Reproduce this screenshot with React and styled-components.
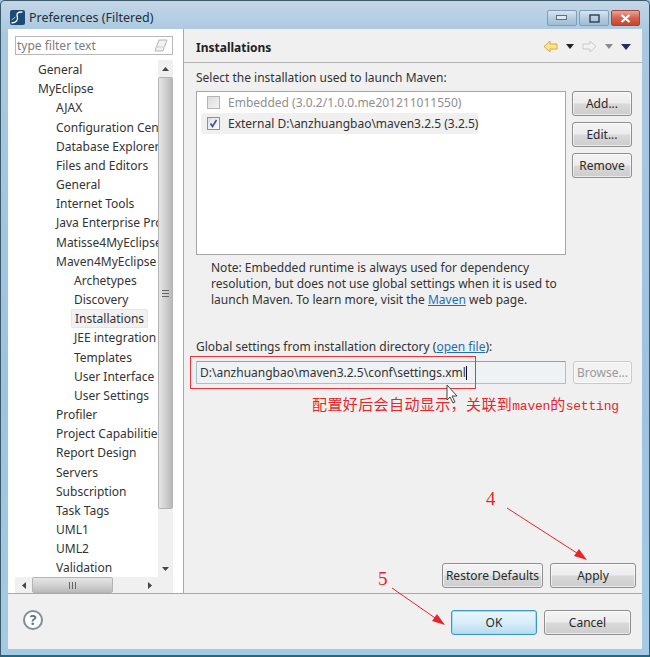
import React from 'react'
import styled, { createGlobalStyle } from 'styled-components'

const UI_FONT = '"Noto Sans", "Open Sans", sans-serif'

const GlobalStyle = createGlobalStyle`
  html, body { margin: 0; padding: 0; background: #9fc3dd; }
  * { box-sizing: border-box; }
`

const Window = styled.div`
  position: relative;
  width: 650px;
  height: 657px;
  overflow: hidden;
  display: flex;
  flex-direction: column;
  padding: 0 7px 6px;
  font-family: ${UI_FONT};
  font-size: 12px;
  color: #333;
  background: linear-gradient(180deg, #c3d6e6 0%, #a9c8e0 5%, #9dc3df 60%, #a4cbe3 100%);
  border: 1px solid #3d5a6d;
  border-bottom: 2px solid #1b6c80;
  border-radius: 5px 5px 0 0;
`

const TitleBar = styled.div`
  flex: none;
  height: 28px;
  display: flex;
  align-items: center;
  gap: 4px;
  padding: 4px 0 0 2px;
  margin-right: 2px;
`

const TitleText = styled.div`
  flex: 1;
  font-size: 12.5px;
  color: #20303c;
`

const WinButtons = styled.div`
  display: flex;
  gap: 2px;
  align-self: flex-start;
  margin-top: 5px;
`

const WinButton = styled.div`
  width: ${(p) => (p.$close ? '29px' : '30px')};
  height: 16px;
  display: flex;
  align-items: center;
  justify-content: center;
  border: 1px solid ${(p) => (p.$close ? '#9c4b3e' : '#7f9db5')};
  border-radius: 2px;
  background: ${(p) =>
    p.$close
      ? 'linear-gradient(180deg, #e8a598 0%, #d9604c 50%, #c6452f 100%)'
      : 'linear-gradient(180deg, #d7e5f0 0%, #b5cde0 50%, #9fbcd3 100%)'};
`

const Client = styled.div`
  flex: 1;
  min-height: 0;
  display: flex;
  flex-direction: column;
  background: #f0f0f0;
`

const Main = styled.div`
  flex: 1;
  min-height: 0;
  display: flex;
  border-bottom: 1px solid #a9a9a9;
`

const Sidebar = styled.div`
  flex: none;
  width: 176px;
  display: flex;
  flex-direction: column;
  padding: 7px 10px 0 7px;
  background: #fff;
  border-right: 1px solid #a9a9a9;
`

const FilterBox = styled.div`
  flex: none;
  height: 19px;
  display: flex;
  align-items: center;
  justify-content: space-between;
  padding: 0 4px 0 1px;
  border: 1px solid #b8b8b8;
  color: #7c7c7c;
  font-size: 12px;
`

const TreeArea = styled.div`
  flex: 1;
  min-height: 0;
  margin-top: 5px;
  display: grid;
  grid-template-columns: 143px 15px;
  grid-template-rows: 1fr 16px;
`

const Tree = styled.div`
  overflow: hidden;
`

const TreeRow = styled.div`
  height: 19.18px;
  line-height: 19px;
  padding-left: ${(p) => 23 + p.$level * 18}px;
  white-space: nowrap;
`

const SelectedLabel = styled.span`
  display: inline-block;
  height: 19px;
  margin-left: -3px;
  padding: 0 3px;
  background: #f1f1f1;
  border: 1px solid #e6e6e6;
  border-radius: 2px;
  line-height: 17px;
`

const VScroll = styled.div`
  display: flex;
  flex-direction: column;
  background: #f0f0f0;
`

const ScrollArrow = styled.div`
  flex: none;
  width: ${(p) => (p.$wide ? '17px' : 'auto')};
  height: ${(p) => (p.$wide ? 'auto' : '17px')};
  margin-top: ${(p) => (p.$end ? 'auto' : '0')};
  display: flex;
  align-items: center;
  justify-content: center;
`

const VThumb = styled.div`
  flex: none;
  height: 432px;
  display: flex;
  align-items: center;
  justify-content: center;
  background: linear-gradient(90deg, #e6e6e6 0%, #d0d0d0 50%, #b8b8b8 100%);
  border: 1px solid #b4b4b4;
  border-radius: 2px;
  color: #555;
`

const HScroll = styled.div`
  display: flex;
  justify-content: space-between;
  background: #f0f0f0;
`

const HThumb = styled.div`
  width: 81px;
  display: flex;
  align-items: center;
  justify-content: center;
  margin-right: auto;
  background: linear-gradient(180deg, #e6e6e6 0%, #d2d2d2 50%, #bababa 100%);
  border: 1px solid #b4b4b4;
  border-radius: 2px;
`

const ScrollCorner = styled.div`
  background: #f0f0f0;
`

const Content = styled.div`
  flex: 1;
  min-width: 0;
  display: flex;
  flex-direction: column;
`

const ContentHeader = styled.div`
  flex: none;
  height: 34px;
  display: flex;
  align-items: center;
  justify-content: space-between;
  padding: 2px 11px 0 12px;
  border-bottom: 1px solid #b4b4b4;
`

const HeaderTitle = styled.div`
  font-weight: 700;
  font-size: 12px;
  padding-top: 2px;
  color: #222;
`

const NavIcons = styled.div`
  display: flex;
  align-items: center;
  gap: 8px;
`

const ContentBody = styled.div`
  flex: 1;
  min-height: 0;
  display: flex;
  flex-direction: column;
  padding: 7px 10px 5px 12px;
`

const Label = styled.div`
  height: 16px;
  line-height: 16px;
  white-space: nowrap;
`

const InstallRow = styled.div`
  display: flex;
  gap: 6px;
  margin-top: 5px;
`

const ListBox = styled.div`
  width: 370px;
  height: 164px;
  padding: 0 1px;
  background: #fff;
  border: 1px solid #a6a6a6;
`

const ListRow = styled.div`
  height: 21px;
  display: flex;
  align-items: center;
  gap: 8px;
  width: ${(p) => (p.$selected ? '277px' : 'auto')};
  margin-left: ${(p) => (p.$selected ? '3px' : '0')};
  padding-left: ${(p) => (p.$selected ? '6px' : '9px')};
  color: ${(p) => (p.$muted ? '#8e8e8e' : '#333')};
  background: ${(p) => (p.$selected ? '#f0f0f0' : 'transparent')};
  border-radius: 2px;
  white-space: nowrap;
`

const CheckBox = styled.div`
  flex: none;
  width: 13px;
  height: 13px;
  display: flex;
  align-items: center;
  justify-content: center;
  border: 1px solid ${(p) => (p.$muted ? '#b5b5b5' : '#8f8f9c')};
  background: ${(p) => (p.$muted ? 'linear-gradient(135deg, #dcdcdc, #f4f4f4)' : 'linear-gradient(135deg, #dcdce4, #fff)')};
`

const ButtonColumn = styled.div`
  display: flex;
  flex-direction: column;
  gap: 6px;
`

const Button = styled.div`
  flex: none;
  width: ${(p) => p.$w}px;
  height: ${(p) => p.$h || 25}px;
  display: flex;
  align-items: center;
  justify-content: center;
  white-space: nowrap;
  font-size: 12px;
  color: ${(p) => (p.$disabled ? '#9a9a9a' : '#2a2a2a')};
  border: 1px solid ${(p) => (p.$primary ? '#3c9ac4' : p.$disabled ? '#c9c9c9' : '#8f8f8f')};
  border-radius: 3px;
  background: ${(p) =>
    p.$primary
      ? 'linear-gradient(180deg, #eaf6fc 0%, #d8eefa 50%, #b4dcf0 100%)'
      : p.$disabled
        ? '#f2f2f2'
        : 'linear-gradient(180deg, #f4f4f4 0%, #ececec 48%, #d9d9d9 52%, #cdcdcd 100%)'};
  box-shadow: ${(p) => (p.$primary ? 'inset 0 0 0 1px #9fdcf3' : 'inset 0 0 0 1px rgba(255,255,255,.6)')};
`

const Note = styled.div`
  margin: 5px 0 0 15px;
  width: 352px;
  line-height: 16px;
`

const LinkText = styled.span`
  color: #1a6fb8;
  text-decoration: underline;
`

const GlobalLabel = styled(Label)`
  margin-top: 31px;
`

const PathRow = styled.div`
  display: flex;
  gap: 7px;
  margin-top: 6px;
`

const PathInput = styled.div`
  width: 370px;
  height: 23px;
  display: flex;
  align-items: center;
  padding-left: 3px;
  background: #eef2f5;
  border: 1px solid #a7c0d4;
  border-top-color: #7da7c8;
  border-radius: 1px;
  white-space: nowrap;
`

const Caret = styled.span`
  display: inline-block;
  width: 1px;
  height: 14px;
  background: #111;
`

const BottomRow = styled.div`
  margin-top: auto;
  margin-right: -4px;
  display: flex;
  justify-content: flex-end;
  gap: 7px;
`

const Footer = styled.div`
  flex: none;
  height: 55px;
  display: flex;
  align-items: flex-start;
  gap: 7px;
  padding: 16px 11px 0 15px;
`

const HelpIcon = styled.div`
  width: 20px;
  height: 20px;
  margin-right: auto;
  display: flex;
  align-items: center;
  justify-content: center;
  border: 2px solid #7d8ea3;
  border-radius: 50%;
  background: #fff;
  color: #60738c;
  font-size: 14px;
  font-weight: 700;
  line-height: 1;
`

const RedBox = styled.div`
  position: absolute;
  left: 189px;
  top: 355px;
  width: 286px;
  height: 33px;
  border: 1px solid #e8343a;
`

const RedNote = styled.div`
  position: absolute;
  left: 311px;
  top: 393px;
  font-family: "Liberation Mono", "Noto Sans CJK SC", monospace;
  font-size: 13px;
  letter-spacing: -0.2px;
  line-height: 20px;
  color: #e5262c;
  white-space: nowrap;
`

const Cjk = styled.span`
  font-family: "Noto Sans CJK SC", sans-serif;
  font-size: 15px;
  letter-spacing: 0.4px;
`

const StepNumber = styled.div`
  position: absolute;
  left: ${(p) => p.$x}px;
  top: ${(p) => p.$y}px;
  font-family: "Liberation Serif", serif;
  font-size: 19px;
  line-height: 20px;
  color: #e5262c;
`

const Overlay = styled.svg`
  position: absolute;
  left: -1px;
  top: -1px;
  pointer-events: none;
`

const treeItems = [
  ['General', 0], ['MyEclipse', 0], ['AJAX', 1], ['Configuration Center', 1], ['Database Explorer', 1],
  ['Files and Editors', 1], ['General', 1], ['Internet Tools', 1], ['Java Enterprise Project', 1],
  ['Matisse4MyEclipse', 1], ['Maven4MyEclipse', 1], ['Archetypes', 2], ['Discovery', 2],
  ['Installations', 2, true], ['JEE integration', 2], ['Templates', 2], ['User Interface', 2],
  ['User Settings', 2], ['Profiler', 1], ['Project Capabilities', 1], ['Report Design', 1], ['Servers', 1],
  ['Subscription', 1], ['Task Tags', 1], ['UML1', 1], ['UML2', 1], ['Validation', 1],
]

const Triangle = ({ dir = 'down', color = '#222', w = 9, h = 5 }) => {
  const points = {
    down: `0,0 ${w},0 ${w / 2},${h}`,
    up: `0,${h} ${w},${h} ${w / 2},0`,
    left: `${w},0 ${w},${h} 0,${h / 2}`,
    right: `0,0 0,${h} ${w},${h / 2}`,
  }
  return (
    <svg width={w} height={h}>
      <polygon points={points[dir]} fill={color} />
    </svg>
  )
}

const NavArrow = ({ flip, fill, stroke }) => (
  <svg width="15" height="13" viewBox="0 0 15 13" style={flip ? { transform: 'scaleX(-1)' } : undefined}>
    <path d="M1 6.5 L7 1 V4 H14 V9 H7 V12 Z" fill={fill} stroke={stroke} strokeWidth="1" strokeLinejoin="round" />
  </svg>
)

const AppLogo = () => (
  <svg width="15" height="15" viewBox="0 0 15 15">
    <rect width="15" height="15" rx="2" fill="#1d4a75" />
    <path d="M12.5 2.2 C9 1.5 6.5 3 7 5.5 C7.4 7.7 8.6 9 6.5 11 C5 12.4 3 13 1.5 12.6" fill="none" stroke="#fff" strokeWidth="1.3" />
    <path d="M1.5 10 L5.5 7" stroke="#9cc0dc" strokeWidth="1" />
  </svg>
)

const App = () => {
  return (
    <Window>
      <GlobalStyle />
      <TitleBar>
        <AppLogo />
        <TitleText>Preferences (Filtered)</TitleText>
        <WinButtons>
          <WinButton>
            <svg width="12" height="6"><rect x="0.5" y="0.5" width="10" height="4" fill="#dfe8f0" stroke="#5a6f82" /></svg>
          </WinButton>
          <WinButton>
            <svg width="11" height="9"><rect x="1" y="1" width="9" height="7" fill="none" stroke="#33475a" strokeWidth="1.5" /></svg>
          </WinButton>
          <WinButton $close>
            <svg width="11" height="9"><path d="M1.5 1 L9.5 8 M9.5 1 L1.5 8" stroke="#fff" strokeWidth="2.2" /></svg>
          </WinButton>
        </WinButtons>
      </TitleBar>
      <Client>
        <Main>
          <Sidebar>
            <FilterBox>
              type filter text
              <svg width="14" height="13" viewBox="0 0 14 13">
                <path d="M5 1 H13 L9 12 H1 Z" fill="#f2f2f2" stroke="#b5b5b5" />
                <path d="M3 8 L11 8" stroke="#cfcfcf" />
              </svg>
            </FilterBox>
            <TreeArea>
              <Tree>
                {treeItems.map(([name, level, selected], i) => (
                  <TreeRow key={i} $level={level}>
                    {selected ? <SelectedLabel>{name}</SelectedLabel> : name}
                  </TreeRow>
                ))}
              </Tree>
              <VScroll>
                <ScrollArrow><Triangle dir="up" color="#444" w={7} h={4} /></ScrollArrow>
                <VThumb>
                  <svg width="7" height="7"><path d="M0 .5H7M0 3.5H7M0 6.5H7" stroke="#666" /></svg>
                </VThumb>
                <ScrollArrow $end><Triangle color="#444" w={7} h={4} /></ScrollArrow>
              </VScroll>
              <HScroll>
                <ScrollArrow $wide><Triangle dir="left" color="#444" w={4} h={7} /></ScrollArrow>
                <HThumb>
                  <svg width="7" height="7"><path d="M.5 0V7M3.5 0V7M6.5 0V7" stroke="#666" /></svg>
                </HThumb>
                <ScrollArrow $wide><Triangle dir="right" color="#444" w={4} h={7} /></ScrollArrow>
              </HScroll>
              <ScrollCorner />
            </TreeArea>
          </Sidebar>
          <Content>
            <ContentHeader>
              <HeaderTitle>Installations</HeaderTitle>
              <NavIcons>
                <NavArrow fill="#fbe38f" stroke="#d9a93a" />
                <Triangle w={8} h={5} />
                <NavArrow flip fill="#f2f2f2" stroke="#c9c9c9" />
                <Triangle w={8} h={5} color="#8b8b8b" />
                <Triangle w={10} h={6} color="#2b2b63" />
              </NavIcons>
            </ContentHeader>
            <ContentBody>
              <Label>Select the installation used to launch Maven:</Label>
              <InstallRow>
                <ListBox>
                  <ListRow $muted>
                    <CheckBox $muted />
                    Embedded (3.0.2/1.0.0.me201211011550)
                  </ListRow>
                  <ListRow $selected>
                    <CheckBox>
                      <svg width="9" height="9"><path d="M1.5 4.5 L3.5 7.5 L7.5 1" fill="none" stroke="#3a4fa8" strokeWidth="1.6" /></svg>
                    </CheckBox>
                    External D:\anzhuangbao\maven3.2.5 (3.2.5)
                  </ListRow>
                </ListBox>
                <ButtonColumn>
                  <Button $w={60}>Add...</Button>
                  <Button $w={60}>Edit...</Button>
                  <Button $w={60}>Remove</Button>
                </ButtonColumn>
              </InstallRow>
              <Note>
                Note: Embedded runtime is always used for dependency resolution, but does not use global settings when it is used to launch Maven. To learn more, visit the <LinkText>Maven</LinkText> web page.
              </Note>
              <GlobalLabel>
                Global settings from installation directory (<LinkText>open file</LinkText>):
              </GlobalLabel>
              <PathRow>
                <PathInput>D:\anzhuangbao\maven3.2.5\conf\settings.xml<Caret /></PathInput>
                <Button $w={59} $h={23} $disabled>Browse...</Button>
              </PathRow>
              <BottomRow>
                <Button $w={101}>Restore Defaults</Button>
                <Button $w={86}>Apply</Button>
              </BottomRow>
            </ContentBody>
          </Content>
        </Main>
        <Footer>
          <HelpIcon>?</HelpIcon>
          <Button $w={86} $primary>OK</Button>
          <Button $w={87}>Cancel</Button>
        </Footer>
      </Client>

      <RedBox />
      <RedNote>
        <Cjk>配置好后会自动显示，关联到</Cjk>maven<Cjk>的</Cjk>setting
      </RedNote>
      <StepNumber $x={485} $y={488}>4</StepNumber>
      <StepNumber $x={377} $y={568}>5</StepNumber>
      <Overlay width="650" height="657">
        <path d="M507 508 L580 555" stroke="#e5262c" strokeWidth="1" />
        <polygon points="587,560 574,556 579,549" fill="#e5262c" />
        <path d="M392 588 L438 620" stroke="#e5262c" strokeWidth="1" />
        <polygon points="445,625 432,621 437,614" fill="#e5262c" />
        <path d="M447 385 V400 L450 397 L453 403 L455 402 L452 396 L457 396 Z" fill="#fff" stroke="#444" strokeWidth="1" />
      </Overlay>
    </Window>
  )
}

export default App
